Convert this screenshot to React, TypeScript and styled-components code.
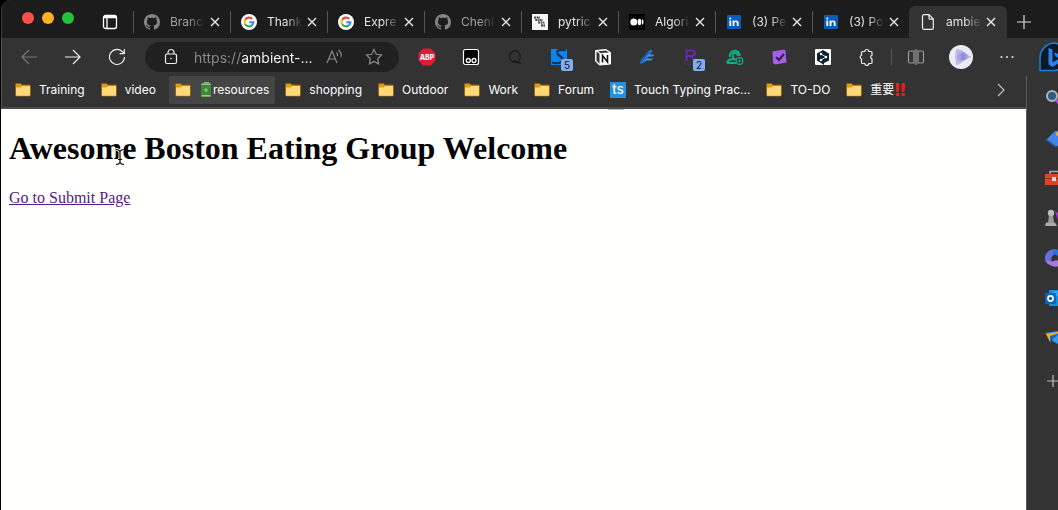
import React from "react";
import styled, { createGlobalStyle, css } from "styled-components";

const ui = `Inter, "Noto Sans CJK SC", "Liberation Sans", sans-serif`;

const Global = createGlobalStyle`
  * { box-sizing: border-box; }
  body { margin: 0; background: #000; }
  button, input { font: inherit; color: inherit; border: 0; padding: 0; background: none; }
  svg { display: block; flex: none; }
`;

const Window = styled.div`
  display: flex;
  flex-direction: column;
  min-height: 100vh;
  margin-left: 1px;
  overflow: hidden;
  border-radius: 10px 0 0 0;
  background: #333;
  box-shadow: inset 1px 0 0 #555;
  font-family: ${ui};
  font-size: 12px;
  line-height: 16px;
  color: #fff;
`;

const TabBar = styled.header`
  display: flex;
  align-items: flex-end;
  height: 38px;
  background: #1c1c1c;
  border-left: 1px solid #3a3a3a;
`;

const Lights = styled.div`
  display: flex;
  gap: 8px;
  align-self: center;
  padding: 0 28px 2px 20px;
`;

const Light = styled.button<{ $color: string }>`
  width: 12px;
  height: 12px;
  border-radius: 50%;
  background: ${(p) => p.$color};
`;

const PlainButton = styled.button`
  display: grid;
  place-items: center;
  flex: none;
  width: 16px;
  height: 32px;
`;

const Tabs = styled.div`
  display: flex;
  flex: none;
  margin-left: 15px;
`;

const Tab = styled.div<{ $active?: boolean }>`
  display: flex;
  align-items: center;
  width: 97px;
  height: 32px;
  border-left: 1px solid transparent;
  border-image: linear-gradient(transparent 6px, #555 6px, #555 26px, transparent 26px) 1;
  ${(p) =>
    p.$active &&
    css`
      border-image: none;
      width: 98px;
      background: #333;
      border-radius: 6px 6px 0 0;
    `}
`;

const TabLabel = styled.button<{ $dim?: boolean }>`
  display: flex;
  align-items: center;
  gap: 10px;
  width: 73px;
  height: 32px;
  padding-left: 10px;
  white-space: nowrap;
  color: ${(p) => (p.$dim ? "#a0a0a0" : "#e4e4e4")};
`;

const TabText = styled.span`
  flex: 1;
  text-align: left;
  mask-image: linear-gradient(to right, #000 50%, transparent 96%);
`;

const NewTab = styled(PlainButton)`
  margin-left: 9px;
`;

const Toolbar = styled.nav`
  display: flex;
  align-items: center;
  height: 38px;
  padding-left: 6px;
`;

const Tool = styled.button`
  position: relative;
  display: grid;
  place-items: center;
  flex: none;
  width: 44px;
  height: 32px;
`;

const WideTool = styled(Tool)`
  width: 46px;
`;

const Badge = styled.span`
  position: absolute;
  right: 8px;
  bottom: 2px;
  width: 12px;
  height: 12px;
  border-radius: 2px;
  background: #84adf0;
  color: #111;
  font-size: 10px;
  line-height: 12px;
  text-align: center;
`;

const Divider = styled.div`
  flex: none;
  width: 1px;
  height: 16px;
  margin: 0 2px;
  background: #5a5a5a;
`;

const Address = styled.div`
  display: flex;
  flex: 1;
  min-width: 0;
  align-items: center;
  height: 30px;
  margin: 0 6px;
  padding: 0 5px 0 17px;
  border-radius: 15px;
  background: #202020;
`;

const AddressInput = styled.input`
  flex: 1;
  min-width: 0;
  height: 24px;
  margin-left: 14px;
  font-size: 14px;
  color: transparent;
  background: linear-gradient(to right, #8c8c8c 48px, #fff 48px);
  background-clip: text;
  -webkit-background-clip: text;
`;

const AddressAction = styled(Tool)`
  width: 40px;
`;

const BingButton = styled.button`
  flex: none;
  width: 28px;
  height: 32px;
  margin-left: 8px;
  margin-right: -8px;
`;

const Body = styled.div`
  display: flex;
  flex: 1;
`;

const Main = styled.div`
  display: flex;
  flex: 1;
  flex-direction: column;
  min-width: 0;
`;

const Bookmarks = styled.nav`
  display: flex;
  align-items: center;
  gap: 4px;
  height: 33px;
  padding: 0 17px 3px 8px;
  border-bottom: 2px solid #4e4a4a;
`;

const Bookmark = styled.a<{ $hover?: boolean }>`
  display: flex;
  align-items: center;
  gap: 8px;
  height: 28px;
  margin-left: ${(p) => (p.$hover ? "3px" : "0")};
  padding: 0 6px;
  border-radius: 2px;
  white-space: nowrap;
  text-decoration: none;
  color: #fff;
  background: ${(p) => (p.$hover ? "#454545" : "transparent")};
`;

const BookmarkText = styled.span`
  display: flex;
  align-items: center;
`;

const Alert = styled.span`
  color: #f01818;
  font-family: "DejaVu Sans", sans-serif;
  font-size: 18px;
  font-weight: 700;
`;

const More = styled(PlainButton)`
  margin-left: auto;
`;

const Page = styled.main`
  position: relative;
  flex: 1;
  padding: 0 8px;
  background: #fffffd;
  color: #000;
  font-family: "Liberation Serif", serif;
  font-size: 16px;
  line-height: 20px;
`;

const Title = styled.h1`
  margin: 21px 0;
  font-size: 32px;
  line-height: 37px;
`;

const VisitedLink = styled.a`
  color: #551a8b;
`;

const Pointer = styled.svg`
  position: absolute;
  left: 114px;
  top: 39px;
`;

const Handle = styled.div`
  position: absolute;
  left: 607px;
  top: 0;
  width: 16px;
  height: 1px;
  background: #bbb;
`;

const Sidebar = styled.aside`
  display: flex;
  flex-direction: column;
  gap: 20px;
  flex: none;
  width: 32px;
  padding: 12px 0 0 18px;
  overflow: hidden;
  border-left: 1px solid #5c5c5c;
`;

const SideButton = styled.button`
  width: 20px;
  height: 20px;
`;

const Cross = () => (
  <svg width="10" height="10" viewBox="0 0 10 10" stroke="#e8e8e8" strokeWidth="1.4" fill="none">
    <path d="M1 1l8 8M9 1l-8 8" />
  </svg>
);

const Github = () => (
  <svg width="16" height="16" viewBox="0 0 16 16" fill="#858585">
    <path d="M8 0C3.58 0 0 3.58 0 8c0 3.54 2.29 6.53 5.47 7.59.4.07.55-.17.55-.38 0-.19-.01-.82-.01-1.49-2.01.37-2.53-.49-2.69-.94-.09-.23-.48-.94-.82-1.13-.28-.15-.68-.52-.01-.53.63-.01 1.08.58 1.23.82.72 1.21 1.87.87 2.33.66.07-.52.28-.87.51-1.07-1.78-.2-3.64-.89-3.64-3.95 0-.87.31-1.59.82-2.15-.08-.2-.36-1.02.08-2.12 0 0 .67-.21 2.2.82.64-.18 1.32-.27 2-.27s1.36.09 2 .27c1.53-1.04 2.2-.82 2.2-.82.44 1.1.16 1.92.08 2.12.51.56.82 1.27.82 2.15 0 3.07-1.87 3.75-3.65 3.95.29.25.54.73.54 1.48 0 1.07-.01 1.93-.01 2.2 0 .21.15.46.55.38A8.01 8.01 0 0 0 16 8c0-4.42-3.58-8-8-8z" />
  </svg>
);

const Google = () => (
  <svg width="16" height="16" viewBox="0 0 16 16" fill="none" strokeWidth="2.1">
    <circle cx="8" cy="8" r="8" fill="#fff" />
    <path d="M11.2 4.9A4.4 4.4 0 0 0 4.2 5.8" stroke="#ea4335" />
    <path d="M4.2 5.8a4.4 4.4 0 0 0 0 4.4" stroke="#fbbc05" />
    <path d="M4.2 10.2a4.4 4.4 0 0 0 6.6 1.2" stroke="#34a853" />
    <path d="M10.8 11.4A4.4 4.4 0 0 0 12.4 8.2H8.2" stroke="#4285f4" />
  </svg>
);

const Pytrick = () => (
  <svg width="16" height="16" viewBox="0 0 16 16">
    <path fill="#f5f5f5" d="M0 0h16v16H0z" />
    <path d="M2 3.500h6M3 6h8M6 8.500h6M9 11.500h4" stroke="#444" strokeWidth="1.800" strokeDasharray="2 .6" />
    <path d="M3.500 3v4M6.500 4v5M9.500 5v6M12 8v5" stroke="#777" />
  </svg>
);

const Medium = () => (
  <svg width="16" height="16" viewBox="0 0 16 16" fill="#fff">
    <path fill="#000" d="M0 0h16v16H0z" />
    <circle cx="4.8" cy="8" r="3.5" />
    <ellipse cx="10.5" cy="8" rx="1.8" ry="3.2" />
    <ellipse cx="13.7" cy="8" rx=".8" ry="2.8" />
  </svg>
);

const LinkedIn = () => (
  <svg width="16" height="16" viewBox="0 0 16 16" fill="#fff">
    <rect x="1" y="1" width="14" height="14" rx="1" fill="#0a5cb8" />
    <circle cx="4.3" cy="4.5" r="1.1" />
    <path d="M3.4 6.5h1.8V12H3.4zM6.6 6.5h1.7v.8c1-1.5 4.3-1.2 4.3 1.7v3h-1.8V9.4c0-2-2.4-1.8-2.4 0V12H6.6z" />
  </svg>
);

const FileIcon = () => (
  <svg width="16" height="16" viewBox="0 0 16 16" fill="none" stroke="#eee" strokeWidth="1.2">
    <path d="M4 .7h5l4.3 4.4v8.6c0 1-.6 1.6-1.5 1.6H4c-.9 0-1.5-.6-1.5-1.5V2.2C2.500 1.200 3.100.7 4 .7zM9 .7v3.500c0 .7.300 1 1 1h3.300" />
  </svg>
);

const Folder = () => (
  <svg width="16" height="16" viewBox="0 0 16 16">
    <path d="M.5 2.500c0-.6.400-1 1-1h4l1.600 1.500h7.400c.6 0 1 .4 1 1v9c0 .6-.4 1-1 1h-13c-.6 0-1-.4-1-1z" fill="#d89b1c" stroke="#8c6410" />
    <path d="M1 5.500h4.600L7.200 4H15v9c0 .6-.3.800-.8.800H1.800c-.5 0-.8-.2-.8-.8z" fill="#ffd978" />
  </svg>
);

const TypingIcon = () => (
  <svg width="16" height="16" viewBox="0 0 16 16">
    <path fill="#2590e0" d="M0 0h16v16H0z" />
    <text x="8" y="12" fill="#fff" fontSize="13" fontWeight="500" fontFamily="Inter, sans-serif" textAnchor="middle">ts</text>
  </svg>
);

const Battery = () => (
  <svg width="14" height="16" viewBox="-1 0 14 16">
    <path fill="#8b9" d="M4 0h5v2H4z" />
    <rect x="1" y="1" width="10" height="14" rx="1.500" fill="#3c8a32" />
    <path fill="#9fc48a" d="M1.500 1.500h9V3h-9zM1.500 13h9v1.500h-9z" />
    <path d="M4 8h4M6 6v4" stroke="#a5d090" />
  </svg>
);

type TabInfo = { text: string; icon: React.FC; dim?: boolean; active?: boolean };

const tabs: TabInfo[] = [
  { text: "Branc", icon: Github, dim: true },
  { text: "Thank", icon: Google },
  { text: "Expre", icon: Google },
  { text: "Chenl", icon: Github, dim: true },
  { text: "pytric", icon: Pytrick },
  { text: "Algori", icon: Medium },
  { text: "(3) Pe", icon: LinkedIn },
  { text: "(3) Po", icon: LinkedIn },
  { text: "ambie", icon: FileIcon, active: true },
];

type BookmarkInfo = { text: string; icon?: React.FC; hover?: boolean; battery?: boolean; alert?: boolean };

const bookmarks: BookmarkInfo[] = [
  { text: "Training" },
  { text: "video" },
  { text: "resources", hover: true, battery: true },
  { text: "shopping" },
  { text: "Outdoor" },
  { text: "Work" },
  { text: "Forum" },
  { text: "Touch Typing Prac...", icon: TypingIcon },
  { text: "TO-DO" },
  { text: "重要", alert: true },
];

const extensions: { name: string; badge?: string; art: React.ReactNode }[] = [
  {
    name: "Ad blocker",
    art: (
      <>
        <path d="M5 0h8l5 5v8l-5 5H5l-5-5V5z" fill="#e01b35" transform="translate(.5 .5) scale(.94)" />
        <text x="9" y="12" fontSize="7" fontWeight="800" fill="#fff" textAnchor="middle" fontFamily="Inter, sans-serif">ABP</text>
      </>
    ),
  },
  {
    name: "Script manager",
    art: (
      <>
        <rect x="1.500" y="1.500" width="15" height="15" rx="2" fill="#000" stroke="#fff" strokeWidth="1.200" />
        <g fill="none" stroke="#fff" strokeWidth="1.300"><circle cx="6.300" cy="12.500" r="2" /><circle cx="12" cy="12.500" r="2" /></g>
      </>
    ),
  },
  {
    name: "Search",
    art: <g fill="none" stroke="#191919" strokeWidth="1.200"><ellipse cx="9" cy="8.500" rx="5.300" ry="5.800" /><path d="M7 13c2-2 4 3 8 2" /></g>,
  },
  {
    name: "Saver",
    badge: "5",
    art: <><path fill="#0c84ee" d="M1 1h16v16H1z" /><path d="M16 2.500C11 1 6 2 7.500 5.500s6 3 5 6.500-6 3.500-10.500 2.500" fill="none" stroke="#123350" strokeWidth="2.200" /></>,
  },
  {
    name: "Notion",
    art: <><path d="M1.500 2.500l10.500-1 4.500 3v11.500l-11 1-4-4z" fill="#fff" stroke="#fff" strokeLinejoin="round" /><path d="M2.500 3.500l3 2.300v10l-3-3.300zM4 3.200l8-.7 3 2-8.500.6z" fill="#333" /><path d="M8.500 14.500V7.500l5 6.500V7" fill="none" stroke="#111" strokeWidth="1.600" /></>,
  },
  {
    name: "Highlighter",
    art: <><path d="M2 16l1-4 7.500-9c1.500-1.500 4-1 4 0L7 14z" fill="#2478d0" /><path d="M10 6.500h6.500l-2 2H8.500zM8 10.500h7l-2 2H6.500z" fill="#3c94e8" /><path d="M3 14L11 4" stroke="#1a4f91" /></>,
  },
  {
    name: "Recorder",
    badge: "2",
    art: <><path d="M4.500 13V2.500H10a2.700 2.700 0 0 1 0 5.500H5M9 8l3 5" fill="none" stroke="#6a27b8" strokeWidth="2" /><path d="M2 16h7" stroke="#6a27b8" strokeDasharray="2 1" /></>,
  },
  {
    name: "Snail",
    art: <><path d="M4 9a5 5 0 1 1 9.800-1M11.500 8A2.500 2.500 0 1 0 8.500 10" fill="none" stroke="#10ac86" strokeWidth="2" /><path d="M1 15c1-3 4-4.500 9-3.500M1 15h9" fill="none" stroke="#10ac86" strokeWidth="2.200" /><circle cx="13.500" cy="13" r="3.300" fill="#333" stroke="#10ac86" strokeWidth="1.300" /><path d="M13.500 11.500v3M12 13h3" stroke="#10ac86" /></>,
  },
  {
    name: "Tasks",
    art: <><path d="M2.500 3.500L14 1.500l1.500 1 1 12L5 16.500l-2-1.500z" fill="#a55eea" /><path d="M6 9l3 3 5-6" fill="none" stroke="#332244" strokeWidth="2" /></>,
  },
  {
    name: "Translate",
    art: <><rect x="1" y="1" width="16" height="16" rx="1" fill="#fff" /><path d="M9 2l6 3.500v7L10 15v2l-3-2-4-2.500v-7z" fill="#10212e" /><path d="M7 6l5 3-5 3" fill="none" stroke="#cde" /><g fill="#fff"><circle cx="7" cy="6" r="1.200" /><circle cx="12" cy="9" r="1.200" /><circle cx="7" cy="12" r="1.200" /></g></>,
  },
  {
    name: "Extensions",
    art: <path d="M4.500 3.500h2.300a2 2 0 0 1 4 0H13c.6 0 1 .4 1 1v2.700a2 2 0 0 0 0 3.800v3.500c0 .6-.4 1-1 1h-2.200a2 2 0 0 1-4 0H4.500c-.6 0-1-.4-1-1V11a2 2 0 0 1 0-3.800V4.500c0-.6.400-1 1-1z" fill="none" stroke="#eee" strokeWidth="1.200" />,
  },
];

const sideItems: { name: string; art: React.ReactNode }[] = [
  { name: "Search", art: <><circle cx="7" cy="8" r="5" fill="#245d8c" stroke="#b4b4b4" strokeWidth="2" /><path d="M11 12l6 6" stroke="#b04de0" strokeWidth="3" /></> },
  { name: "Shopping", art: <><path d="M1 12L10 3l10-1v9l-9 8z" fill="#4285e8" /><path d="M1 12l10 8v-2L2 11z" fill="#2457b8" /><circle cx="13" cy="6" r="2" fill="#f4b931" /></> },
  { name: "Tools", art: <><path d="M5 6V3.500h9V6" fill="none" stroke="#aaa" strokeWidth="1.500" /><path d="M0 6h19v11H0z" fill="#d94727" /><path d="M0 10h19v1H0z" fill="#9f2c17" /><path d="M7 9h4v4H7z" fill="#ddd" /></> },
  { name: "Games", art: <><path d="M1 14.500h9l2 3.500H0z" fill="#aaa" /><path d="M4 7h4l1 8H3z" fill="#999" /><circle cx="6" cy="5" r="3.200" fill="#bbb" /><path d="M10 3l3 2 4-3v13h-3z" fill="#a23bd4" /></> },
  { name: "Microsoft 365", art: <><path d="M9 1C4 2 0 5 0 10c0 4 2 6 5 7l2-3c-2-4 0-7 5-9z" fill="#666ee0" /><path d="M1 12c3 2 7 2 10 0l8 3c-3 4-9 5-14 2-2-1-3-3-4-5z" fill="#a978e0" /><path d="M9 1c5 0 10 3 10 9v5l-6-3V8L7 5z" fill="#2b72d8" /></> },
  { name: "Outlook", art: <><path d="M4 2h16v16H4z" fill="#1490df" /><path d="M8 3h6v5H8z" fill="#2ea5ee" /><rect x="0" y="5" width="11" height="11" rx="1" fill="#0867bd" /><circle cx="5.500" cy="10.500" r="2.600" fill="none" stroke="#fff" strokeWidth="1.600" /></> },
  { name: "Drop", art: <><path d="M0 5l20-3-5 15-6-3z" fill="#369be9" /><path d="M1 6l17-3-11 7-2 4z" fill="#f2ae2c" /><path d="M5 8l10-3-8 7-2 4z" fill="#1d68bd" /></> },
];

const ToolIcon = ({ children, color = "#eee" }: { children: React.ReactNode; color?: string }) => (
  <svg width="18" height="18" viewBox="0 0 18 18" fill="none" stroke={color} strokeWidth="1.2">
    {children}
  </svg>
);

export default function App() {
  return (
    <>
      <Global />
      <Window>
        <TabBar>
          <Lights>
            <Light $color="#fe5048" aria-label="Close window" />
            <Light $color="#fdb124" aria-label="Minimize window" />
            <Light $color="#23c137" aria-label="Zoom window" />
          </Lights>
          <PlainButton aria-label="Tab actions">
            <svg width="16" height="16" viewBox="0 0 16 16" fill="none" stroke="#fff" strokeWidth="1.3">
              <rect x="1.500" y="1.500" width="13" height="13" rx="2" />
              <path d="M2 3h12" strokeWidth="2.500" />
              <path d="M5 4v10" />
            </svg>
          </PlainButton>
          <Tabs>
            {tabs.map(({ text, icon: Icon, dim, active }) => (
              <Tab key={text} $active={active}>
                <TabLabel $dim={dim}>
                  <Icon />
                  <TabText>{text}</TabText>
                </TabLabel>
                <PlainButton aria-label={`Close ${text}`}>
                  <Cross />
                </PlainButton>
              </Tab>
            ))}
          </Tabs>
          <NewTab aria-label="New tab">
            <svg width="14" height="14" viewBox="0 0 14 14" stroke="#ddd" strokeWidth="1.2"><path d="M7 0v14M0 7h14" /></svg>
          </NewTab>
        </TabBar>

        <Toolbar>
          <Tool aria-label="Back">
            <ToolIcon color="#777"><path d="M17 9H2M9 2L2 9l7 7" /></ToolIcon>
          </Tool>
          <Tool aria-label="Forward">
            <ToolIcon><path d="M1 9h15M9 2l7 7-7 7" /></ToolIcon>
          </Tool>
          <Tool aria-label="Reload">
            <ToolIcon><path d="M16.500 9a7.500 7.500 0 1 1-2.600-5.700L16 5.500M16.300 1v4.700h-4.700" /></ToolIcon>
          </Tool>
          <Address>
            <svg width="18" height="18" viewBox="0 0 18 18" fill="none" stroke="#eee" strokeWidth="1.200">
              <rect x="3.500" y="6" width="11" height="9.500" rx="1.500" />
              <path d="M6 6V4.500a3 3 0 0 1 6 0V6" />
              <circle cx="9" cy="10.500" r=".8" fill="#fff" stroke="none" />
            </svg>
            <AddressInput aria-label="Address" defaultValue="https://ambient-..." />
            <AddressAction aria-label="Read aloud">
              <ToolIcon color="#8a8a8a"><path d="M2 15L7 3l5 12M3.700 11h6.600M11.500 4.500q1.500 1.500 1 3.500M13.500 2q3.500 3 2.500 7" /></ToolIcon>
            </AddressAction>
            <AddressAction aria-label="Add to favorites">
              <ToolIcon color="#8a8a8a"><path d="M9 1.500l2.300 4.800 5.200.7-3.800 3.700.9 5.200L9 13.400l-4.600 2.500.9-5.200L1.500 7l5.200-.7z" /></ToolIcon>
            </AddressAction>
          </Address>
          {extensions.map((e) => (
            <Tool key={e.name} aria-label={e.name}>
              <svg width="18" height="18" viewBox="0 0 18 18">{e.art}</svg>
              {e.badge && <Badge>{e.badge}</Badge>}
            </Tool>
          ))}
          <Divider />
          <Tool aria-label="Split screen">
            <ToolIcon color="#999"><path d="M7 3H3a1.500 1.500 0 0 0-1.500 1.500v9A1.500 1.500 0 0 0 3 15h4zM11 3h4a1.500 1.500 0 0 1 1.500 1.500v9A1.500 1.500 0 0 1 15 15h-4zM9 1v16" /></ToolIcon>
          </Tool>
          <WideTool aria-label="Profile">
            <svg width="24" height="24" viewBox="0 0 24 24">
              <defs>
                <radialGradient id="blob">
                  <stop offset="0" stopColor="#6f74d4" />
                  <stop offset="1" stopColor="#a9a6e4" stopOpacity=".5" />
                </radialGradient>
              </defs>
              <circle cx="12" cy="12" r="12" fill="#eceaf2" />
              <path d="M7 4q3-1 6 1.500l9 6.500-8 4q-3 4-7 4l-1-8z" fill="url(#blob)" />
              <path d="M7 4l7 12M6 12l16 0M7 20l6-14M9 5l-1 14" stroke="#b4a8ea" strokeWidth=".6" />
            </svg>
          </WideTool>
          <WideTool aria-label="Settings and more">
            <svg width="14" height="4" viewBox="0 0 14 4" fill="#ddd"><circle cx="1.500" cy="2" r="1.100" /><circle cx="7" cy="2" r="1.100" /><circle cx="12.500" cy="2" r="1.100" /></svg>
          </WideTool>
          <BingButton aria-label="Bing Chat">
            <svg width="32" height="32" viewBox="0 0 32 32">
              <path d="M2 29.500V17a15 15 0 0 1 15-15A14 14 0 0 1 17 29.500z" fill="#101822" stroke="#1683dc" strokeWidth="1.500" />
              <path d="M10.500 7l4 1.500v13l7-4-4-2-1.500-4 9 3v5L14.500 26l-4-2.500z" fill="#2682ee" />
            </svg>
          </BingButton>
        </Toolbar>

        <Body>
          <Main>
            <Bookmarks>
              {bookmarks.map(({ text, icon: Icon = Folder, hover, battery, alert }) => (
                <Bookmark key={text} href="#" $hover={hover}>
                  <Icon />
                  <BookmarkText>
                    {battery && <Battery />}
                    {text}
                    {alert && <Alert>‼</Alert>}
                  </BookmarkText>
                </Bookmark>
              ))}
              <More aria-label="More bookmarks">
                <svg width="8" height="14" viewBox="0 0 8 14" fill="none" stroke="#bbb" strokeWidth="1.300"><path d="M1 1l6 6-6 6" /></svg>
              </More>
            </Bookmarks>
            <Page>
              <Title>Awesome Boston Eating Group Welcome</Title>
              <VisitedLink href="#">Go to Submit Page</VisitedLink>
              <Handle />
              <Pointer width="10" height="18" viewBox="0 0 10 18" fill="none">
                <path d="M1 1.500q3 0 4 2 1-2 4-2M5 3.500v11M1 16.500q3 0 4-2 1 2 4 2M3 11.500h4" stroke="#fff" strokeWidth="3" />
                <path d="M1 1.500q3 0 4 2 1-2 4-2M5 3.500v11M1 16.500q3 0 4-2 1 2 4 2M3 11.500h4" stroke="#000" strokeWidth="1.200" />
              </Pointer>
            </Page>
          </Main>
          <Sidebar>
            {sideItems.map((s) => (
              <SideButton key={s.name} aria-label={s.name}>
                <svg width="20" height="20" viewBox="0 0 20 20">{s.art}</svg>
              </SideButton>
            ))}
            <SideButton aria-label="Customize">
              <svg width="20" height="20" viewBox="0 0 20 20" stroke="#bbb" strokeWidth="1.200"><path d="M8 7v12M2 13h12" /></svg>
            </SideButton>
          </Sidebar>
        </Body>
      </Window>
    </>
  );
}
